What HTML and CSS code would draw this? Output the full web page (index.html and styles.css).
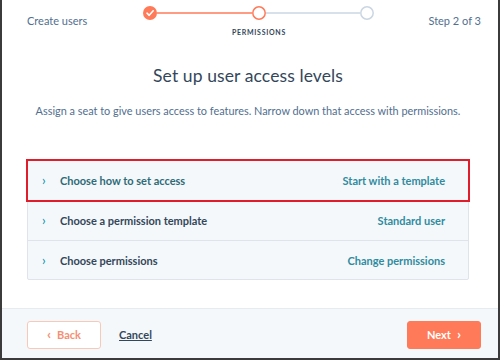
FILE: index.html
```html
<!DOCTYPE html>
<html>
<head>
<meta charset="utf-8">
<link rel="stylesheet" href="styles.css">
</head>
<body>
<div class="frame">
  <header class="topbar">
    <div class="crumb">Create users</div>
    <div class="stepper">
      <svg class="steps" width="232" height="26" viewBox="0 0 232 26">
        <line x1="14" y1="13" x2="109" y2="13" stroke="#ff7a59" stroke-width="1.5"/>
        <line x1="123" y1="13" x2="217" y2="13" stroke="#cbd6e2" stroke-width="1.5"/>
        <circle cx="7" cy="13" r="7" fill="#ff7a59"/>
        <path d="M4 13.2 L6.2 15.3 L10.2 10.8" fill="none" stroke="#fff" stroke-width="1.6" stroke-linecap="round" stroke-linejoin="round"/>
        <circle cx="116" cy="13" r="6.2" fill="#fff" stroke="#ff7a59" stroke-width="1.5"/>
        <circle cx="224" cy="13" r="6.2" fill="#fff" stroke="#cbd6e2" stroke-width="1.5"/>
      </svg>
      <div class="step-label">PERMISSIONS</div>
    </div>
    <div class="count">Step 2 of 3</div>
  </header>

  <main class="content">
    <h1 class="title">Set up user access levels</h1>
    <p class="subtitle">Assign a seat to give users access to features. Narrow down that access with permissions.</p>

    <div class="table">
      <div class="row row-active">
        <span class="chev">›</span>
        <span class="row-title">Choose how to set access</span>
        <span class="row-value">Start with a template</span>
      </div>
      <div class="row">
        <span class="chev">›</span>
        <span class="row-title">Choose a permission template</span>
        <span class="row-value">Standard user</span>
      </div>
      <div class="row">
        <span class="chev">›</span>
        <span class="row-title">Choose permissions</span>
        <span class="row-value">Change permissions</span>
      </div>
    </div>
  </main>

  <footer class="footer">
    <button class="btn btn-back"><span class="arrow">‹</span> Back</button>
    <a class="cancel">Cancel</a>
    <button class="btn btn-next">Next <span class="arrow">›</span></button>
  </footer>
</div>
</body>
</html>
```

FILE: styles.css
```css
* { box-sizing: border-box; }
html, body { margin: 0; padding: 0; background: #fff; }
body { font-family: Lato, "Noto Sans", sans-serif; color: #33475b; }

.frame {
  width: 500px;
  height: 360px;
  border: 2px solid #3b3b3b;
  border-top: none;
  display: flex;
  flex-direction: column;
  background: #fff;
}

.topbar {
  display: grid;
  grid-template-columns: 141px 232px 1fr;
  height: 46px;
}
.crumb {
  padding-left: 25px;
  padding-top: 14px;
  font-size: 11px;
  color: #516f90;
}
.stepper { display: flex; flex-direction: column; align-items: center; }
.steps { display: block; }
.step-label {
  font-size: 7px;
  font-weight: 700;
  letter-spacing: 0.7px;
  color: #33475b;
  margin-top: 2px;
}
.count {
  text-align: right;
  padding-right: 17px;
  padding-top: 14px;
  font-size: 11px;
  color: #516f90;
}

.content {
  flex: 1;
  display: flex;
  flex-direction: column;
  align-items: center;
  padding: 0 4px 0 0;
}
.title {
  margin: 17px 0 0;
  font-size: 17.5px;
  font-weight: 400;
  line-height: 26px;
  color: #33475b;
  letter-spacing: 0.1px;
}
.subtitle {
  margin: 15px 0 0;
  font-size: 10.9px;
  line-height: 14px;
  color: #516f90;
}

.table {
  width: 442px;
  margin-top: 42px;
  border: 1px solid #dfe3eb;
  border-radius: 2px;
  background: #f5f8fa;
}
.row {
  display: flex;
  align-items: center;
  height: 40px;
  padding: 0 23px 0 14px;
  border-top: 1px solid #dfe3eb;
  font-size: 11px;
  font-weight: 700;
}
.row:first-child { border-top: none; height: 39px; }
.row:last-child { height: 39px; }
.row-active {
  outline: 2px solid #e01e2b;
  outline-offset: 0px;
  position: relative;
}
.chev {
  width: 18px;
  color: #0091ae;
  font-size: 13px;
  font-weight: 400;
  line-height: 1;
}
.row-title { color: #33475b; }
.row-active .row-title { color: #2d6b78; }
.row-value { margin-left: auto; color: #2f8ba0; }

.footer {
  height: 50px;
  background: #f5f8fa;
  border-top: 1px solid #e5ebf1;
  display: flex;
  align-items: center;
  padding: 2px 17px 0 25px;
}
.btn {
  width: 74px;
  height: 28px;
  border-radius: 3px;
  font-family: inherit;
  font-size: 11px;
  font-weight: 700;
  display: flex;
  align-items: center;
  justify-content: center;
  gap: 6px;
  padding: 0;
}
.btn-back {
  background: #fff;
  border: 1px solid #f8c9b9;
  color: #f58f72;
}
.btn-next {
  margin-left: auto;
  background: #ff7a59;
  border: 1px solid #ff7a59;
  color: #fff;
}
.arrow { font-size: 14px; font-weight: 700; line-height: 1; margin-top: -2px; }
.cancel {
  margin-left: 18px;
  font-size: 11px;
  font-weight: 700;
  color: #33475b;
  text-decoration: underline;
}
```
